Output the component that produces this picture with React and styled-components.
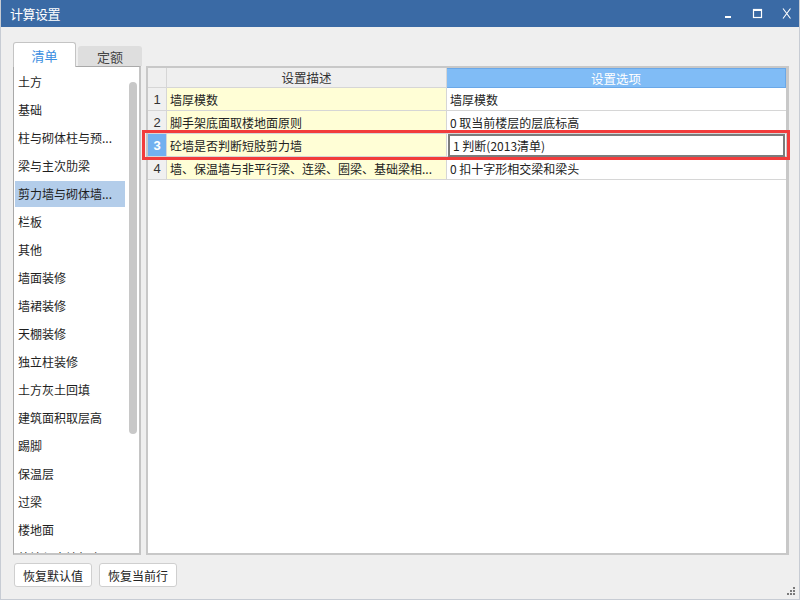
import React from "react";
import styled, { createGlobalStyle } from "styled-components";

const GlobalStyle = createGlobalStyle`
  body {
    margin: 0;
    font-family: "Noto Sans CJK SC", "Noto Sans", "Liberation Sans", sans-serif;
    font-size: 12px;
    color: #222;
  }
`;

const listItems = [
  "土方",
  "基础",
  "柱与砌体柱与预...",
  "梁与主次肋梁",
  "剪力墙与砌体墙...",
  "栏板",
  "其他",
  "墙面装修",
  "墙裙装修",
  "天棚装修",
  "独立柱装修",
  "土方灰土回填",
  "建筑面积取层高",
  "踢脚",
  "保温层",
  "过梁",
  "楼地面",
  "外墙与内墙相交",
];

const rows = [
  { no: 1, desc: "墙厚模数", option: "墙厚模数" },
  { no: 2, desc: "脚手架底面取楼地面原则", option: "0 取当前楼层的层底标高" },
  { no: 3, desc: "砼墙是否判断短肢剪力墙", option: "1 判断(2013清单)" },
  { no: 4, desc: "墙、保温墙与非平行梁、连梁、圈梁、基础梁相...", option: "0 扣十字形相交梁和梁头" },
];

export default function App() {
  const selectedItem = 4;
  const selectedRow = 3;

  return (
    <>
      <GlobalStyle />
      <Window>
        <TitleBar>
          <Title>计算设置</Title>
          <Controls>
            <svg width="10" height="10" viewBox="0 0 10 10">
              <rect x="1" y="7" width="6" height="2" fill="#fff" />
            </svg>
            <svg width="12" height="12" viewBox="0 0 12 12">
              <rect x="1.5" y="1.5" width="8" height="8" fill="none" stroke="#fff" strokeWidth="1.2" />
              <rect x="1" y="1" width="9" height="2" fill="#fff" />
            </svg>
            <svg width="10" height="11" viewBox="0 0 10 11">
              <path d="M1 0.5 L8.5 10.5 M8.5 0.5 L1 10.5" stroke="#fff" strokeWidth="1.1" />
            </svg>
          </Controls>
        </TitleBar>

        <Body>
          <Tabs>
            <Tab active>清单</Tab>
            <Tab>定额</Tab>
          </Tabs>

          <Content>
            <ListPanel>
              {listItems.map((item, i) => (
                <ListItem key={item} selected={i === selectedItem}>
                  {item}
                </ListItem>
              ))}
              <ScrollThumb />
            </ListPanel>

            <GridWrap>
              <GridPanel>
                <Table>
                  <HeadCell />
                  <HeadCell>设置描述</HeadCell>
                  <HeadCell blue>设置选项</HeadCell>
                  {rows.map((r) => (
                    <React.Fragment key={r.no}>
                      <NoCell selected={r.no === selectedRow}>{r.no}</NoCell>
                      <DescCell>{r.desc}</DescCell>
                      <OptionCell>
                        {r.no === selectedRow ? <Editor>{r.option}</Editor> : r.option}
                      </OptionCell>
                    </React.Fragment>
                  ))}
                </Table>
              </GridPanel>
              <RedMark />
            </GridWrap>
          </Content>

          <Footer>
            <Button>恢复默认值</Button>
            <Button>恢复当前行</Button>
          </Footer>
        </Body>

        <Grip>
          <svg width="9" height="9" viewBox="0 0 9 9">
            <rect x="6" y="0" width="2" height="2" fill="#7a7a7a" />
            <rect x="3" y="3" width="2" height="2" fill="#7a7a7a" />
            <rect x="6" y="3" width="2" height="2" fill="#7a7a7a" />
            <rect x="0" y="6" width="2" height="2" fill="#7a7a7a" />
            <rect x="3" y="6" width="2" height="2" fill="#7a7a7a" />
            <rect x="6" y="6" width="2" height="2" fill="#7a7a7a" />
          </svg>
        </Grip>
      </Window>
    </>
  );
}

const Window = styled.div`
  position: relative;
  width: 800px;
  height: 600px;
  box-sizing: border-box;
  display: flex;
  flex-direction: column;
  background: #efefef;
  border: 1px solid #c7ccd4;
  border-top: none;
  overflow: hidden;
`;

const TitleBar = styled.div`
  height: 27px;
  flex-shrink: 0;
  margin: 0 -1px;
  background: #3a6aa5;
  display: flex;
  align-items: center;
  justify-content: space-between;
  padding: 0 8px 0 10px;
`;

const Title = styled.div`
  color: #fff;
  font-size: 13px;
  letter-spacing: -0.5px;
`;

const Controls = styled.div`
  display: flex;
  align-items: center;
  gap: 18px;

  svg {
    display: block;
  }
`;

const Body = styled.div`
  flex: 1;
  display: flex;
  flex-direction: column;
  padding: 15px 10px 0 12px;
`;

const Tabs = styled.div`
  display: flex;
  align-items: flex-end;
  gap: 2px;
  height: 24px;
`;

const Tab = styled.div`
  box-sizing: border-box;
  width: ${(p) => (p.active ? "63px" : "64px")};
  height: ${(p) => (p.active ? "25px" : "20px")};
  margin-bottom: ${(p) => (p.active ? "-1px" : "0")};
  position: relative;
  z-index: ${(p) => (p.active ? 1 : 0)};
  display: flex;
  align-items: center;
  justify-content: center;
  border-radius: 3px 3px 0 0;
  font-size: 13px;
  background: ${(p) => (p.active ? "#fff" : "#dedede")};
  color: ${(p) => (p.active ? "#3a8ee0" : "#444")};
  border: ${(p) => (p.active ? "1px solid #c4c4c4" : "none")};
  border-bottom: none;
`;

const Content = styled.div`
  display: flex;
  gap: 5px;
  height: 489px;
`;

const ListPanel = styled.div`
  position: relative;
  box-sizing: border-box;
  width: 128px;
  height: 100%;
  background: #fff;
  border: 1px solid #a9a9a9;
  border-right: 2px solid #c4c4c4;
  border-bottom: 2px solid #c4c4c4;
  overflow: hidden;
`;

const ListItem = styled.div`
  width: 110px;
  height: 26px;
  margin: 2px 0 0 1px;
  padding-left: 3px;
  box-sizing: border-box;
  line-height: 26px;
  white-space: nowrap;
  color: #1e1e1e;
  background: ${(p) => (p.selected ? "#b3cdea" : "transparent")};
`;

const ScrollThumb = styled.div`
  position: absolute;
  left: 115px;
  top: 15px;
  width: 8px;
  height: 352px;
  border-radius: 4px;
  background: #c8c8c8;
`;

const GridWrap = styled.div`
  position: relative;
  flex: 1;
  height: 100%;
`;

const GridPanel = styled.div`
  box-sizing: border-box;
  height: 100%;
  background: #fff;
  border: 2px solid #c8c8c8;
  border-right-width: 3px;
`;

const Table = styled.div`
  display: grid;
  grid-template-columns: 19px 280px 1fr;
  grid-auto-rows: 23px;
  grid-template-rows: 20px;
`;

const HeadCell = styled.div`
  box-sizing: border-box;
  display: flex;
  align-items: center;
  justify-content: center;
  background: ${(p) => (p.blue ? "#80bcf6" : "#efefef")};
  color: ${(p) => (p.blue ? "#fff" : "#333")};
  border-right: 1px solid ${(p) => (p.blue ? "#6aa8e8" : "#d6d6d6")};
  border-bottom: 1px solid ${(p) => (p.blue ? "#6aa8e8" : "#d6d6d6")};
  border-top: ${(p) => (p.blue ? "1px solid #6aa8e8" : "none")};
  font-size: 12.5px;
`;

const NoCell = styled.div`
  box-sizing: border-box;
  display: flex;
  align-items: center;
  justify-content: center;
  background: ${(p) => (p.selected ? "#72b0ef" : "#f0f0f0")};
  color: ${(p) => (p.selected ? "#fff" : "#333")};
  font-weight: ${(p) => (p.selected ? 700 : 400)};
  font-family: "Liberation Sans", sans-serif;
  font-size: 13px;
  border-right: 1px solid #d6d6d6;
  border-bottom: 1px solid #d6d6d6;
`;

const DescCell = styled.div`
  box-sizing: border-box;
  display: flex;
  align-items: center;
  padding-left: 3px;
  white-space: nowrap;
  overflow: hidden;
  background: #fffed6;
  border-right: 1px solid #d6d6d6;
  border-bottom: 1px solid #d6d6d6;
`;

const OptionCell = styled.div`
  box-sizing: border-box;
  display: flex;
  align-items: center;
  padding-left: 3px;
  white-space: nowrap;
  background: #fff;
  border-bottom: 1px solid #d6d6d6;
`;

const Editor = styled.div`
  box-sizing: border-box;
  display: flex;
  align-items: center;
  height: 23px;
  margin: 0 1px 0 -2px;
  padding-left: 3px;
  flex: 1;
  border: 2px solid #7c7c7c;
`;

const RedMark = styled.div`
  position: absolute;
  left: -4px;
  top: 64px;
  width: 648px;
  height: 30px;
  box-sizing: border-box;
  border: 3px solid #f23c3c;
  pointer-events: none;
`;

const Footer = styled.div`
  display: flex;
  gap: 7px;
  margin-top: 8px;
  padding-left: 1px;
`;

const Button = styled.button`
  width: 78px;
  height: 24px;
  box-sizing: border-box;
  background: #fff;
  border: 1px solid #cfcfcf;
  border-radius: 3px;
  font-family: "Noto Sans CJK SC", "Noto Sans", sans-serif;
  font-size: 12px;
  color: #222;
  padding: 0;
`;

const Grip = styled.div`
  position: absolute;
  right: 3px;
  bottom: 3px;
  line-height: 0;
`;
